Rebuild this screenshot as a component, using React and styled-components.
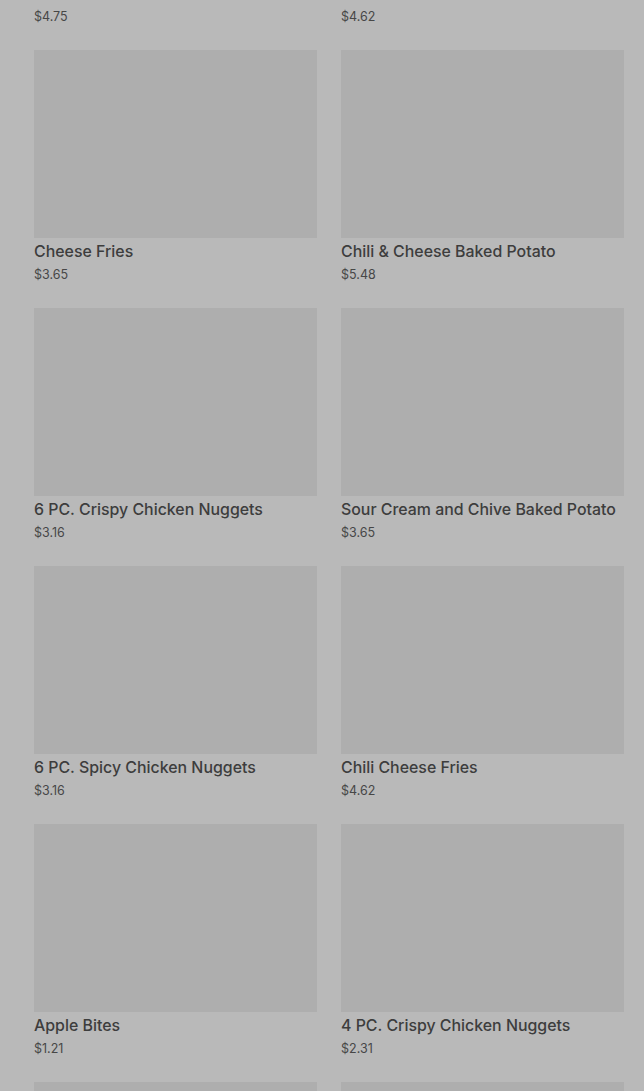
import React from "react";
import styled, { createGlobalStyle } from "styled-components";

const Global = createGlobalStyle`
  html, body { margin: 0; padding: 0; background: #b9b9b9; overflow: hidden; }
  body { font-family: Inter, "Noto Sans", sans-serif; }
`;

const Page = styled.div`
  width: 644px;
  height: 1091px;
  overflow: hidden;
  background: #b9b9b9;
`;

const Grid = styled.div`
  display: grid;
  grid-template-columns: 283px 283px;
  column-gap: 24px;
  row-gap: 24px;
  padding-left: 34px;
  margin-top: -208px;
`;

const Card = styled.div`
  display: flex;
  flex-direction: column;
`;

const Thumb = styled.div`
  height: 188px;
  background: #aeaeae;
`;

const Title = styled.div`
  font-size: 15.9px;
  font-weight: 500;
  line-height: 24px;
  margin-top: 2px;
  color: #3d3d3d;
  white-space: nowrap;
`;

const Price = styled.div`
  font-size: 12.5px;
  line-height: 19px;
  padding-top: 1px;
  color: #474747;
`;

const items = [
  ["Bacon Cheddar Fries", "$4.75"],
  ["Baked Potato", "$4.62"],
  ["Cheese Fries", "$3.65"],
  ["Chili & Cheese Baked Potato", "$5.48"],
  ["6 PC. Crispy Chicken Nuggets", "$3.16"],
  ["Sour Cream and Chive Baked Potato", "$3.65"],
  ["6 PC. Spicy Chicken Nuggets", "$3.16"],
  ["Chili Cheese Fries", "$4.62"],
  ["Apple Bites", "$1.21"],
  ["4 PC. Crispy Chicken Nuggets", "$2.31"],
  ["10 PC. Crispy Chicken Nuggets", "$4.99"],
  ["Large Fries", "$2.49"],
];

export default function App() {
  return (
    <Page>
      <Global />
      <Grid>
        {items.map(([t, p], i) => (
          <Card key={i}>
            <Thumb />
            <Title>{t}</Title>
            <Price>{p}</Price>
          </Card>
        ))}
      </Grid>
    </Page>
  );
}
